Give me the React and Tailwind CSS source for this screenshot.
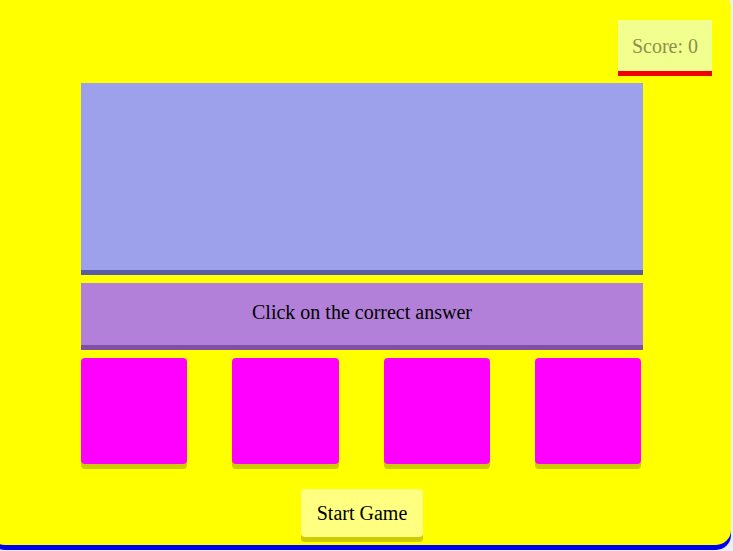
import { useState } from "react";

const choices = [1, 2, 3, 4];

export default function App() {
  const [score] = useState(0);

  return (
    <div className="overflow-hidden bg-[#eeeef2] pb-1.5 pr-0.5 font-['Liberation_Serif','Times_New_Roman',serif] text-xl leading-6 text-black">
      <main className="-ml-2.5 -mt-2 flex flex-col rounded-[15px] bg-[#ffff00] px-[19px] pb-2 pt-7 shadow-[0_5px_0_#0000f0]">
        <div className="self-end border-b-5 border-[#f00000] bg-[#f1ff8e] px-3.5 pb-[13px] pt-3.5 text-[#8b8f50]">
          Score: {score}
        </div>

        <div className="mt-[7px] flex flex-col pl-[72px] pr-[69px]">
          <section
            aria-label="Question"
            className="h-[187px] bg-[#9da0ea] shadow-[0_5px_0_#585aa5]"
          />
          <p className="mt-[13px] bg-[#b280d8] pb-[21px] pt-[17px] text-center shadow-[0_5px_0_#8050a5]">
            Click on the correct answer
          </p>
          <div className="mt-[13px] grid grid-cols-4 gap-[45px] pr-0.5">
            {choices.map((choice) => (
              <button
                key={choice}
                type="button"
                aria-label={`Answer ${choice}`}
                className="aspect-square rounded-[4px] bg-[#ff00ff] shadow-[0_5px_0_#cccc00]"
              />
            ))}
          </div>
          <button
            type="button"
            className="mt-[25px] self-center rounded-[4px] bg-[#ffff80] px-4 py-3 shadow-[0_5px_0_#cccc00]"
          >
            Start Game
          </button>
        </div>
      </main>
    </div>
  );
}
